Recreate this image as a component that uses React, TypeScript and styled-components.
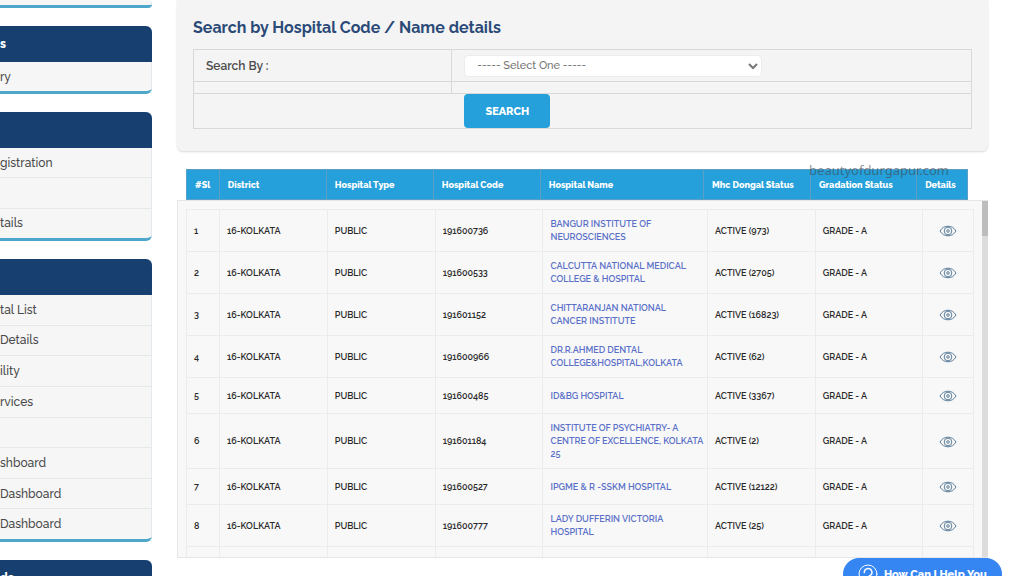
import React from "react";
import styled, { createGlobalStyle } from "styled-components";

const GlobalStyle = createGlobalStyle`
  * { box-sizing: border-box; }
  body {
    margin: 0;
    background: #fff;
    color: #333;
    font-family: Raleway, Lato, "Liberation Sans", sans-serif;
    overflow: hidden;
  }
`;

const Page = styled.div`
  display: flex;
  gap: 25px;
  height: 100vh;
  overflow: hidden;
  position: relative;
  padding-right: 36px;
`;

const Sidebar = styled.nav`
  flex: 0 0 152px;
  display: flex;
  flex-direction: column;
  gap: 18px;
`;

const Card = styled.section`
  flex: none;
  background: #f6f6f6;
  border-bottom: 3px solid #4fa6cb;
  border-radius: 0 6px 6px 0;
  overflow: hidden;
`;

const CardHead = styled.h2`
  margin: 0;
  height: 36px;
  background: #174070;
  color: #fff;
  font-size: 12px;
  line-height: 36px;
  font-weight: 800;
`;

const Menu = styled.ul<{ $height: number }>`
  list-style: none;
  margin: 0;
  padding: 0;
  display: flex;
  flex-direction: column;
  height: ${(p) => p.$height}px;
  border-right: 1px solid #e3e9ec;
`;

const MenuItem = styled.li`
  flex: 1 1 0;
  display: flex;
  align-items: center;
  & + & { border-top: 1px solid #e6e9ea; }
`;

const MenuLink = styled.a`
  color: #4a4a4a;
  font-size: 12px;
  line-height: 16px;
  text-decoration: none;
  font-weight: 500;
  white-space: nowrap;
`;

const Main = styled.main`
  flex: 1;
  min-width: 0;
`;

const SearchPanel = styled.form`
  background: #f4f4f4;
  border-radius: 0 0 6px 6px;
  box-shadow: 0 1px 2px #d9d9d9;
  padding: 18px 16px 22px;
  margin-bottom: 18px;
`;

const Title = styled.h1`
  margin: 0 0 11px;
  color: #2b4a78;
  font-size: 16px;
  line-height: 20px;
  font-weight: 700;
`;

const FormTable = styled.table`
  width: 100%;
  border-collapse: collapse;
  table-layout: fixed;
`;

const FormCell = styled.td<{ $h: number; $w?: string }>`
  border: 1px solid #d8d8d8;
  height: ${(p) => p.$h}px;
  width: ${(p) => p.$w ?? "auto"};
  padding: 0 12px;
`;

const FieldLabel = styled.label`
  display: block;
  font-size: 12px;
  line-height: 16px;
  font-weight: 600;
  color: #4c4c4c;
`;

const Select = styled.select`
  display: block;
  width: 60%;
  min-width: 298px;
  height: 22px;
  border: 1px solid #ececec;
  border-radius: 4px;
  background: #fff;
  color: #777;
  font-family: inherit;
  font-size: 11px;
  font-weight: 500;
  padding: 0 0 0 8px;
`;

const ButtonCell = styled(FormCell)`
  padding-left: calc(33.2% + 12px);
`;

const SearchButton = styled.button`
  display: block;
  width: 86px;
  height: 34px;
  border: 0;
  border-radius: 4px;
  background: #25a0da;
  color: #fff;
  font-family: inherit;
  font-size: 11px;
  font-weight: 800;
  padding: 0;
`;

const HeadWrap = styled.div`
  padding: 0 20px 0 9px;
`;

const DataTable = styled.table`
  width: 100%;
  border-collapse: collapse;
  table-layout: fixed;
`;

const HeadCell = styled.th`
  height: 30px;
  padding: 2px 8px 0;
  background: #25a0da;
  border: 1px solid #5b9fc4;
  color: #fff;
  font-size: 9px;
  line-height: 13px;
  font-weight: 800;
  text-align: left;
  white-space: nowrap;
`;

const ScrollPanel = styled.div`
  display: flex;
  height: 358px;
  overflow: hidden;
  background: #f8f8f8;
  border: 1px solid #e4e6e7;
  border-right: 0;
`;

const ScrollBody = styled.div`
  flex: 1;
  min-width: 0;
  padding: 8px 8px 0;
`;

const ScrollTrack = styled.div`
  flex: 0 0 6px;
  background: #dcdcdc;
`;

const ScrollThumb = styled.div`
  height: 35px;
  background: #bdbdbd;
`;

const Row = styled.tr`
  height: 36px;
`;

const Cell = styled.td<{ $center?: boolean }>`
  border: 1px solid #ebecec;
  padding: 8px 7px 7px;
  color: #2a2a2a;
  font-size: 9px;
  line-height: 13px;
  font-weight: 600;
  white-space: nowrap;
  text-align: ${(p) => (p.$center ? "center" : "left")};
`;

const HospitalLink = styled.a`
  color: #5a70c8;
  text-decoration: none;
`;

const EyeButton = styled.button`
  display: inline-flex;
  vertical-align: middle;
  border: 0;
  padding: 0;
  background: none;
`;

const Watermark = styled.span`
  position: absolute;
  right: 75px;
  top: 161px;
  font-family: "Noto Sans", "Open Sans", sans-serif;
  font-size: 13px;
  line-height: 18px;
  color: rgba(60, 70, 80, 0.6);
`;

const HelpButton = styled.button`
  position: absolute;
  right: 22px;
  bottom: -14px;
  width: 159px;
  height: 32px;
  display: flex;
  align-items: center;
  gap: 6px;
  padding: 0 0 0 15px;
  border: 0;
  border-radius: 16px;
  background: #3585f3;
  color: #fff;
  font-family: inherit;
  font-size: 11px;
  font-weight: 800;
  white-space: nowrap;
`;

const EyeIcon = () => (
  <svg width="18" height="12" viewBox="0 0 18 12" fill="none" stroke="#5d7f9b" strokeWidth="1">
    <path d="M1 6C3 2.600 5.800 1.200 9 1.200S15 2.600 17 6C15 9.400 12.200 10.800 9 10.800S3 9.400 1 6Z" />
    <circle cx="9" cy="6" r="3.800" />
    <circle cx="9" cy="6" r="1.300" />
  </svg>
);

const HelpIcon = () => (
  <svg width="20" height="20" viewBox="0 0 20 20" fill="none" stroke="#fff" strokeLinecap="round">
    <circle cx="10" cy="10" r="9" strokeWidth="1" />
    <path d="M6.300 8.500a3.800 3.800 0 1 1 5.600 3.200c-1.200.7-1.900 1.200-1.900 2.300" strokeWidth="1.500" />
    <circle cx="10" cy="16.300" r=".6" fill="#fff" />
  </svg>
);

const menus = [
  { title: "s", height: 29, items: ["ry"] },
  { title: "", height: 90, items: ["gistration", "", "tails"] },
  {
    title: "",
    height: 244,
    items: ["tal List", "Details", "ility", "rvices", "", "shboard", "Dashboard", "Dashboard"],
  },
  { title: "ds", height: 30, items: [""] },
];

const headColumns: [string, string][] = [
  ["#Sl", "4.2%"],
  ["District", "13.7%"],
  ["Hospital Type", "13.7%"],
  ["Hospital Code", "13.7%"],
  ["Hospital Name", "20.9%"],
  ["Mhc Dongal Status", "13.7%"],
  ["Gradation Status", "13.6%"],
  ["Details", "6.5%"],
];

const hospitals: [string, string[], string][] = [
  ["191600736", ["BANGUR INSTITUTE OF", "NEUROSCIENCES"], "973"],
  ["191600533", ["CALCUTTA NATIONAL MEDICAL", "COLLEGE & HOSPITAL"], "2705"],
  ["191601152", ["CHITTARANJAN NATIONAL", "CANCER INSTITUTE"], "16823"],
  ["191600966", ["DR.R.AHMED DENTAL", "COLLEGE&HOSPITAL,KOLKATA"], "62"],
  ["191600485", ["ID&BG HOSPITAL"], "3367"],
  ["191601184", ["INSTITUTE OF PSYCHIATRY- A", "CENTRE OF EXCELLENCE, KOLKATA", "25"], "2"],
  ["191600527", ["IPGME & R -SSKM HOSPITAL"], "12122"],
  ["191600777", ["LADY DUFFERIN VICTORIA", "HOSPITAL"], "25"],
];

const Columns = () => (
  <colgroup>
    {headColumns.map(([name, width]) => (
      <col key={name} style={{ width }} />
    ))}
  </colgroup>
);

export default function App() {
  return (
    <Page>
      <GlobalStyle />
      <Sidebar>
        <Card>
          <Menu $height={5} />
        </Card>
        {menus.map((menu, i) => (
          <Card key={i}>
            <CardHead>{menu.title}</CardHead>
            <Menu $height={menu.height}>
              {menu.items.map((item, j) => (
                <MenuItem key={j}>{item && <MenuLink href="#">{item}</MenuLink>}</MenuItem>
              ))}
            </Menu>
          </Card>
        ))}
      </Sidebar>
      <Main>
        <SearchPanel>
          <Title>Search by Hospital Code / Name details</Title>
          <FormTable>
            <tbody>
              <tr>
                <FormCell $h={32} $w="33.2%">
                  <FieldLabel htmlFor="searchBy">Search By :</FieldLabel>
                </FormCell>
                <FormCell $h={32}>
                  <Select id="searchBy">
                    <option>----- Select One -----</option>
                  </Select>
                </FormCell>
              </tr>
              <tr>
                <FormCell $h={12} />
                <FormCell $h={12} />
              </tr>
              <tr>
                <ButtonCell $h={35} colSpan={2}>
                  <SearchButton type="button">SEARCH</SearchButton>
                </ButtonCell>
              </tr>
            </tbody>
          </FormTable>
        </SearchPanel>
        <HeadWrap>
          <DataTable>
            <Columns />
            <thead>
              <tr>
                {headColumns.map(([name]) => (
                  <HeadCell key={name}>{name}</HeadCell>
                ))}
              </tr>
            </thead>
          </DataTable>
        </HeadWrap>
        <ScrollPanel>
          <ScrollBody>
            <DataTable>
              <Columns />
              <tbody>
                {hospitals.map(([code, name, count], i) => (
                  <Row key={code}>
                    <Cell>{i + 1}</Cell>
                    <Cell>16-KOLKATA</Cell>
                    <Cell>PUBLIC</Cell>
                    <Cell>{code}</Cell>
                    <Cell>
                      <HospitalLink href="#">
                        {name.map((line, j) => (
                          <React.Fragment key={j}>
                            {j > 0 && <br />}
                            {line}
                          </React.Fragment>
                        ))}
                      </HospitalLink>
                    </Cell>
                    <Cell>ACTIVE ({count})</Cell>
                    <Cell>GRADE - A</Cell>
                    <Cell $center>
                      <EyeButton type="button" aria-label="View details">
                        <EyeIcon />
                      </EyeButton>
                    </Cell>
                  </Row>
                ))}
                <Row>
                  {headColumns.map(([name]) => (
                    <Cell key={name} />
                  ))}
                </Row>
              </tbody>
            </DataTable>
          </ScrollBody>
          <ScrollTrack>
            <ScrollThumb />
          </ScrollTrack>
        </ScrollPanel>
      </Main>
      <Watermark>beautyofdurgapur.com</Watermark>
      <HelpButton type="button">
        <HelpIcon />
        How Can I Help You
      </HelpButton>
    </Page>
  );
}
